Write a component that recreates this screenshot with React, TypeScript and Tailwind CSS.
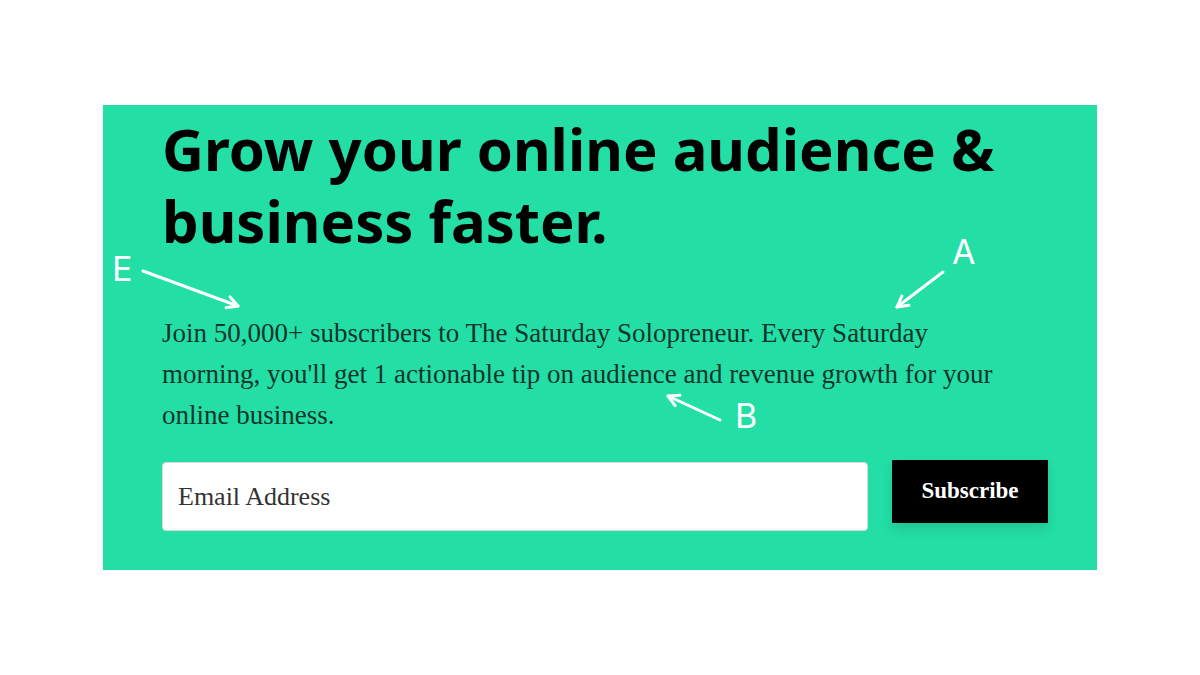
import React from 'react';

// annotation arrows laid over the screenshot
const Arrow = ({ x1, y1, x2, y2 }: { x1: number; y1: number; x2: number; y2: number }) => {
  const angle = Math.atan2(y2 - y1, x2 - x1);
  const len = 12;
  const spread = 0.5;
  const ax = x2 - len * Math.cos(angle - spread);
  const ay = y2 - len * Math.sin(angle - spread);
  const bx = x2 - len * Math.cos(angle + spread);
  const by = y2 - len * Math.sin(angle + spread);
  return (
    <g stroke="white" strokeWidth={3} strokeLinecap="round" fill="none">
      <line x1={x1} y1={y1} x2={x2} y2={y2} />
      <polyline points={`${ax},${ay} ${x2},${y2} ${bx},${by}`} strokeLinejoin="round" />
    </g>
  );
};

export default function App() {
  return (
    <div className="relative flex h-[675px] w-[1200px] justify-center bg-white pt-[105px]">
      <section className="h-[465px] w-[994px] bg-[#23dfa6] pl-[59px] pr-[49px] pt-[8px]">
        <h1 className="font-['Noto_Sans',sans-serif] text-[58px] font-bold leading-[72px] text-black">
          Grow your online audience &amp;
          <br />
          business faster.
        </h1>
        <p className="mt-[56px] w-[865px] font-['Liberation_Serif',serif] text-[27px] leading-[41px] text-[#10352a]">
          Join 50,000+ subscribers to The Saturday Solopreneur. Every Saturday morning, you'll get 1 actionable tip on
          audience and revenue growth for your online business.
        </p>
        <form className="mt-[26px] flex items-start gap-[24px]">
          <input
            type="email"
            placeholder="Email Address"
            className="h-[69px] w-[706px] rounded-[4px] border border-[#d9d9d9] bg-white px-[15px] font-['Liberation_Serif',serif] text-[26px] text-[#333] outline-none placeholder:text-[#333]"
          />
          <button
            type="button"
            className="-mt-[2px] h-[63px] w-[156px] bg-black font-['Liberation_Serif',serif] text-[23px] font-bold text-white shadow-[0_6px_12px_rgba(0,0,0,0.12)]"
          >
            Subscribe
          </button>
        </form>
      </section>

      <svg className="pointer-events-none absolute inset-0" width={1200} height={675}>
        <g fill="white" fontFamily="Inter, sans-serif" fontSize={34}>
          <text x={112} y={281}>E</text>
          <text x={952} y={264}>A</text>
          <text x={735} y={428}>B</text>
        </g>
        <Arrow x1={143} y1={271} x2={238} y2={306} />
        <Arrow x1={943} y1={272} x2={897} y2={307} />
        <Arrow x1={720} y1={420} x2={668} y2={396} />
      </svg>
    </div>
  );
}
